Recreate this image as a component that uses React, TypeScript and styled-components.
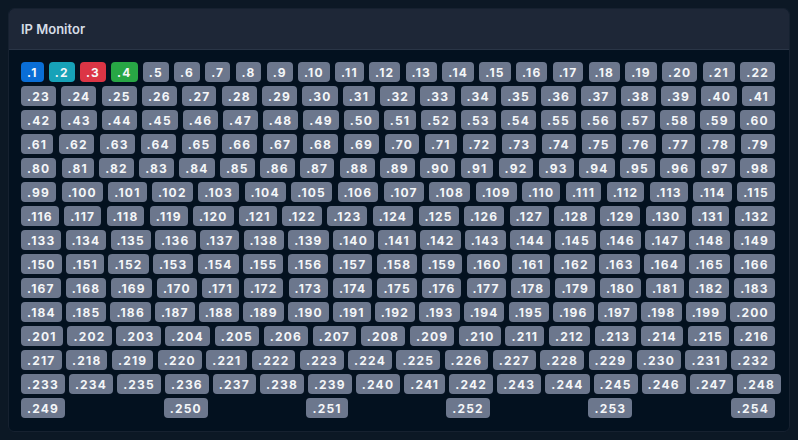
import React from "react";
import styled, { createGlobalStyle } from "styled-components";

type Status = "up" | "warn" | "down" | "ok" | "idle";

const special: Record<number, Status> = { 1: "up", 2: "warn", 3: "down", 4: "ok" };

const hosts = Array.from({ length: 254 }, (_, i) => ({
    id: i + 1,
    status: special[i + 1] || ("idle" as Status),
}));

// how many hosts fit on each line of the panel
const rowSizes = [22, 19, 19, 19, 19, 17, 17, 17, 17, 17, 17, 16, 16, 16, 6];

const rows = rowSizes.reduce<{ start: number; list: (typeof hosts)[] }>(
    (acc, n) => {
        acc.list.push(hosts.slice(acc.start, acc.start + n));
        acc.start += n;
        return acc;
    },
    { start: 0, list: [] }
).list;

const colors: Record<Status, string> = {
    up: "#0a6ed6",
    warn: "#17a2b8",
    down: "#dc3545",
    ok: "#28a745",
    idle: "#6c778d",
};

const App = () => {
    return (
        <>
            <GlobalStyle />
            <Card>
                <Header>IP Monitor</Header>
                <Body>
                    {rows.map((row, i) => (
                        <Row key={i}>
                            {row.map(h => (
                                <Badge key={h.id} $status={h.status}>.{h.id}</Badge>
                            ))}
                        </Row>
                    ))}
                </Body>
            </Card>
        </>
    )
}

const GlobalStyle = createGlobalStyle`
    body {
        margin: 8px;
        background: #0c1825;
        font-family: Inter, "Noto Sans", sans-serif;
    }
`;

const Card = styled.div`
    border: 1px solid #162130;
    border-radius: 6px;
    background: #03111f;
    overflow: hidden;
`;

const Header = styled.div`
    height: 40px;
    display: flex;
    align-items: center;
    padding: 0 12px;
    background: #1e2737;
    border-bottom: 1px solid #2a3546;
    color: #d6dde6;
    font-size: 13px;
    font-weight: 600;
`;

const Body = styled.div`
    display: flex;
    flex-direction: column;
    gap: 4px;
    padding: 12px 14px 13px 12px;
`;

const Row = styled.div`
    display: flex;
    justify-content: space-between;
    gap: 4px;
`;

const Badge = styled.span<{ $status: Status }>`
    display: inline-flex;
    align-items: center;
    height: 20px;
    padding: 0 6px;
    border-radius: 4px;
    background: ${p => colors[p.$status]};
    color: #f4f6f8;
    font-size: 12px;
    font-weight: 700;
    letter-spacing: 1.2px;
`;

export default App
